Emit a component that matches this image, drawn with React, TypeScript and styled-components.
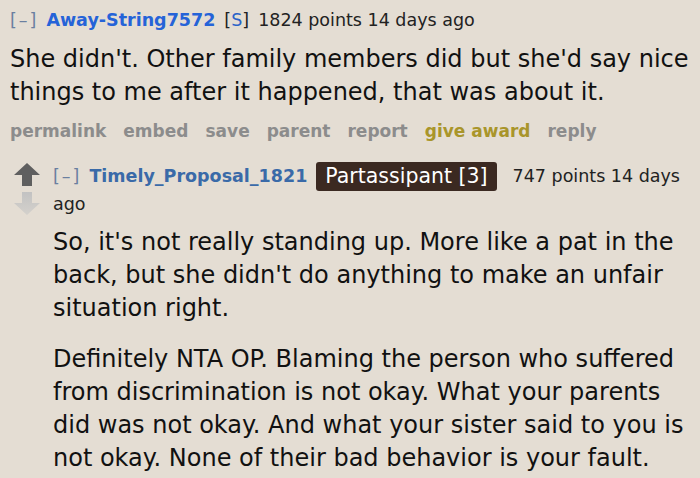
import React from "react";
import styled, { createGlobalStyle } from "styled-components";

const GlobalStyle = createGlobalStyle`
  html, body {
    margin: 0;
    padding: 0;
    background: #e4ddd3;
  }
  body {
    font-family: "DejaVu Sans", Verdana, sans-serif;
    color: #1a1a1a;
  }
`;

const Page = styled.div`
  width: 700px;
  height: 478px;
  overflow: hidden;
  box-sizing: border-box;
  padding: 8px 0 0 10px;
`;

const Tagline = styled.div`
  font-size: 17.5px;
  line-height: 24px;
  color: #222;
`;

const Expand = styled.span`
  color: #6a7fa0;
  letter-spacing: 2px;
  margin-right: 8px;
`;

const Author = styled.a<{ $color: string }>`
  color: ${(p) => p.$color};
  font-weight: bold;
  text-decoration: none;
  margin-right: 9px;
`;

const Submitter = styled.span`
  margin-right: 9px;
  & b {
    font-weight: normal;
    color: #2a62c8;
  }
`;

const Body = styled.div`
  font-size: 24px;
  line-height: 33px;
  color: #111;
  margin-top: 11px;
  p {
    margin: 0 0 18px;
  }
  p:last-child {
    margin-bottom: 0;
  }
`;

const Actions = styled.ul`
  list-style: none;
  display: flex;
  gap: 17px;
  margin: 10px 0 0;
  padding: 0;
  font-size: 17px;
  line-height: 24px;
  font-weight: bold;
`;

const Action = styled.li<{ $gold?: boolean }>`
  color: ${(p) => (p.$gold ? "#a9952a" : "#8c8c8c")};
`;

const Child = styled.div`
  display: flex;
  margin-top: 19px;
`;

const Votes = styled.div`
  width: 43px;
  flex-shrink: 0;
  display: flex;
  flex-direction: column;
  align-items: flex-start;
  gap: 6px;
  padding: 1px 0 0 4px;
  box-sizing: border-box;
  svg {
    display: block;
  }
`;

const Entry = styled.div`
  flex: 1;
  padding-right: 10px;
`;

const ChildTagline = styled(Tagline)`
  line-height: 27px;
`;

const Flair = styled.span`
  display: inline-block;
  vertical-align: middle;
  background: #3b2921;
  color: #fff;
  font-size: 20.5px;
  line-height: 29px;
  padding: 0 9px;
  border-radius: 3px;
  margin-right: 16px;
`;

const ChildBody = styled(Body)`
  margin-top: 8px;
`;

const Arrow = ({ up, fill }: { up: boolean; fill: string }) => (
  <svg width="26" height="23" viewBox="0 0 26 23">
    <defs>
      <linearGradient id="fade" x1="0" y1="0" x2="0" y2="1">
        <stop offset="0" stopColor="#c2c2c2" />
        <stop offset="1" stopColor="#d4d1cc" />
      </linearGradient>
    </defs>
    <path
      d={
        up
          ? "M13 0 L26 12 L18 12 L18 23 L8 23 L8 12 L0 12 Z"
          : "M13 23 L26 11 L18 11 L18 0 L8 0 L8 11 L0 11 Z"
      }
      fill={fill}
    />
  </svg>
);

export default function App() {
  return (
    <>
      <GlobalStyle />
      <Page>
        <Tagline>
          <Expand>[–]</Expand>
          <Author $color="#2563d8">Away-String7572</Author>
          <Submitter>
            [<b>S</b>]
          </Submitter>
          1824 points 14 days ago
        </Tagline>
        <Body>
          <p>
            She didn't. Other family members did but she'd say nice things to me after it happened, that was about it.
          </p>
        </Body>
        <Actions>
          <Action>permalink</Action>
          <Action>embed</Action>
          <Action>save</Action>
          <Action>parent</Action>
          <Action>report</Action>
          <Action $gold>give award</Action>
          <Action>reply</Action>
        </Actions>
        <Child>
          <Votes>
            <Arrow up fill="#5f5f5f" />
            <Arrow up={false} fill="url(#fade)" />
          </Votes>
          <Entry>
            <ChildTagline>
              <Expand>[–]</Expand>
              <Author $color="#3a6aa8">Timely_Proposal_1821</Author>
              <Flair>Partassipant [3]</Flair>
              747 points 14 days ago
            </ChildTagline>
            <ChildBody>
              <p>
                So, it's not really standing up. More like a pat in the back, but she didn't do anything to make an unfair situation right.
              </p>
              <p>
                Definitely NTA OP. Blaming the person who suffered from discrimination is not okay. What your parents did was not okay. And what your sister said to you is not okay. None of their bad behavior is your fault.
              </p>
            </ChildBody>
          </Entry>
        </Child>
      </Page>
    </>
  );
}
